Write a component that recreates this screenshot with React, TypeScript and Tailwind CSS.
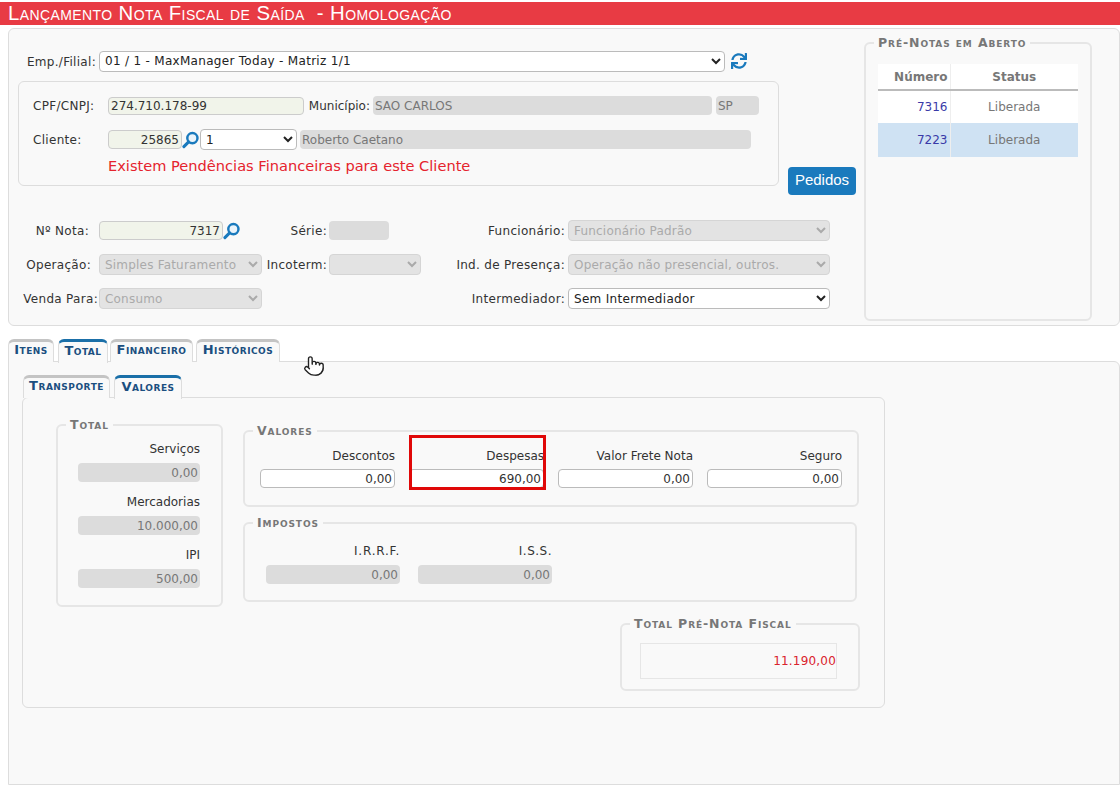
import React from 'react'
import { Pointer } from 'lucide-react'
import { FaSync } from 'react-icons/fa'

const fieldset = 'border-2 border-[#e6e6e6] rounded-md'
const legend = 'ml-2 px-1 text-[12.5px] leading-3 font-bold [font-variant:small-caps] text-[#777] tracking-[0.9px]'
const greyInput = 'h-[19px] bg-[#dcdcdc] rounded-sm px-0.5 text-[12px] text-[#777] outline-none'
const whiteInput = 'h-[19px] bg-white border border-[#bbb] rounded-sm px-0.5 text-[12px] text-[#333] text-right outline-none'
const greenInput = 'bg-[#f1f4ea] border border-[#ccc] rounded-sm px-0.5 text-[12px] text-[#333] outline-none'
const disabledSelect = 'h-[21px] bg-[#e3e3e3] border border-[#d5d5d5] rounded-sm pl-px text-[12px] text-[#aaa] tracking-[0.2px]'
const activeSelect = 'h-[21px] bg-white border border-[#bbb] rounded-sm pl-px text-[12px] text-[#222] tracking-[0.3px]'
const formLabel = 'pt-px text-[12px] text-[#333] tracking-[0.3px] shrink-0'
const label = 'text-[12px] text-[#333] text-right shrink-0'

function Lens() {
  return (
    <svg viewBox="0 0 18 18" className="w-[17px] h-[18px] shrink-0">
      <circle cx="11" cy="7" r="5.4" fill="#eaf4fb" stroke="#1a7abd" strokeWidth="2.6" />
      <path d="M7 11 L2 16" stroke="#1a7abd" strokeWidth="3.2" strokeLinecap="round" />
    </svg>
  )
}

function Tab({ text, active, width }: { text: string; active?: boolean; width: string }) {
  return (
    <div
      className={`${width} pb-1 flex items-center justify-center rounded-t-md border-x border-[#ddd] border-t-[3px] text-[13px] tracking-[0.5px] font-bold [font-variant:small-caps] text-[#1b4f80] bg-[#f9f9f9] ${
        active ? 'border-t-[#1a6fa8] z-10 h-[24px] -mb-px' : 'h-[23px] border-t-[#c4c4c4]'
      }`}
    >
      {text}
    </div>
  )
}

function ReadOnlyTotal({ name, value }: { name: string; value: string }) {
  return (
    <div className="flex flex-col items-end w-[122px]">
      <div className={`${label} leading-4`}>{name}</div>
      <input readOnly value={value} className={`${greyInput} w-[122px] text-right mt-1.5 mb-3`} />
    </div>
  )
}

function MoneyField({ name, value }: { name: string; value: string }) {
  return (
    <div className="flex flex-col items-stretch">
      <div className={`${label} leading-4`}>{name}</div>
      <input readOnly value={value} className={`${whiteInput} mt-[5px] w-full`} />
    </div>
  )
}

export default function App() {
  return (
    <div className="relative w-[1120px] h-[785px] overflow-hidden bg-white pt-0.5 flex flex-col font-['DejaVu_Sans',sans-serif]">
      {/* Title bar */}
      <div className="h-[23px] bg-[#e83b44] pl-2 flex items-center text-white text-[20.4px] tracking-[0.4px] [font-variant:small-caps] font-['Liberation_Sans',sans-serif] whitespace-pre">
        Lançamento Nota Fiscal de Saída  - Homologação
      </div>

      {/* Header form */}
      <div className="ml-2 mt-[3px] h-[298px] bg-[#f9f9f9] border border-[#ddd] rounded-md flex shrink-0">
        <div className="w-[855px] shrink-0 pt-[22px]">
          <div className="flex items-center h-5">
            <span className={`${formLabel} w-[87px] text-right`}>Emp./Filial:</span>
            <select className={`${activeSelect} ml-[3px] w-[626px] h-5`}>
              <option>01 / 1 - MaxManager Today - Matriz 1/1</option>
            </select>
            <FaSync className="ml-1.5 text-[#1a7abd] text-[16px]" />
          </div>

          <div className="flex mt-[10px] ml-[9px]">
            <div className="w-[761px] h-[105px] border border-[#ddd] rounded-md pt-[14px] pl-[14px]">
              <div className="flex items-center">
                <span className={`${formLabel} w-[75px]`}>CPF/CNPJ:</span>
                <input readOnly value="274.710.178-99" className={`${greenInput} w-[196px] h-[18px]`} />
                <span className="pt-px text-[12px] text-[#333] shrink-0 ml-1 w-[62px] text-right">Município:</span>
                <input readOnly value="SAO CARLOS" className={`${greyInput} ml-[3px] w-[339px] h-[18px]`} />
                <input readOnly value="SP" className={`${greyInput} ml-1 w-[43px] h-[18px]`} />
              </div>
              <div className="flex items-center mt-[14px]">
                <span className={`${formLabel} w-[75px]`}>Cliente:</span>
                <input readOnly value="25865" className={`${greenInput} w-[74px] h-[19px] text-right`} />
                <Lens />
                <select className={`${activeSelect} ml-px w-[97px]`}>
                  <option>1</option>
                </select>
                <input readOnly value="Roberto Caetano" className={`${greyInput} ml-[3px] w-[451px]`} />
              </div>
              <div className="ml-[75px] mt-[7px] text-[14.6px] leading-[18px] text-[#e5232d]">
                Existem Pendências Financeiras para este Cliente
              </div>
            </div>
            <button className="self-end -mb-[9px] ml-[9px] w-[68px] h-7 pb-0.5 bg-[#1a7abd] rounded-sm text-white text-[15px] font-['Liberation_Sans',sans-serif]">
              Pedidos
            </button>
          </div>

          <div className="mt-[34px] flex flex-col gap-[13px]">
            <div className="flex items-center h-[21px]">
              <span className={`${formLabel} w-[80px] mr-[10px] text-right`}>Nº Nota:</span>
              <input readOnly value="7317" className={`${greenInput} w-[124px] h-[19px] text-right`} />
              <Lens />
              <span className={`${formLabel} w-[87px] text-right`}>Série:</span>
              <input readOnly value="" className={`${greyInput} ml-0.5 w-[60px]`} />
              <span className={`${formLabel} w-[176px] text-right`}>Funcionário:</span>
              <select disabled className={`${disabledSelect} ml-[3px] w-[262px]`}>
                <option>Funcionário Padrão</option>
              </select>
            </div>
            <div className="flex items-center h-[21px]">
              <span className={`${formLabel} w-[82px] mr-2 text-right`}>Operação:</span>
              <select disabled className={`${disabledSelect} w-[163px]`}>
                <option>Simples Faturamento</option>
              </select>
              <span className={`${formLabel} w-[65px] text-right`}>Incoterm:</span>
              <select disabled className={`${disabledSelect} ml-0.5 w-[92px]`}>
                <option></option>
              </select>
              <span className={`${formLabel} w-[144px] text-right`}>Ind. de Presença:</span>
              <select disabled className={`${disabledSelect} ml-[3px] w-[262px]`}>
                <option>Operação não presencial, outros.</option>
              </select>
            </div>
            <div className="flex items-center h-[21px]">
              <span className={`${formLabel} w-[89px] mr-px text-right`}>Venda Para:</span>
              <select disabled className={`${disabledSelect} w-[163px]`}>
                <option>Consumo</option>
              </select>
              <span className={`${formLabel} w-[303px] text-right`}>Intermediador:</span>
              <select className={`${activeSelect} ml-[3px] w-[262px]`}>
                <option>Sem Intermediador</option>
              </select>
            </div>
          </div>
        </div>

        {/* Open notes */}
        <fieldset className={`${fieldset} w-[228px] h-[284px] mt-2`}>
          <legend className={legend}>Pré-Notas em Aberto</legend>
          <div className="pl-3 pt-[15px]">
            <table className="w-[200px] text-[12px] text-[#777] border-collapse">
              <thead>
                <tr className="h-[26px] bg-white border-b-2 border-[#bbb]">
                  <th className="w-[72px] pr-0.5 text-right border-r border-[#eee]">Número</th>
                  <th className="text-center">Status</th>
                </tr>
              </thead>
              <tbody>
                <tr className="h-[33px] bg-white">
                  <td className="pr-0.5 text-right text-[#3a3aa8] border-r border-[#eee]">7316</td>
                  <td className="text-center">Liberada</td>
                </tr>
                <tr className="h-[34px] bg-[#cfe2f3]">
                  <td className="pr-0.5 text-right text-[#3a3aa8] border-r border-[#eee]">7223</td>
                  <td className="text-center">Liberada</td>
                </tr>
              </tbody>
            </table>
          </div>
        </fieldset>
      </div>

      {/* Main tabs */}
      <div className="ml-2 mt-[13px] flex items-start gap-0.5 h-[22px] shrink-0 relative">
        <Tab text="Itens" width="w-[46px] mr-0.5" />
        <Tab text="Total" width="w-[50px]" active />
        <Tab text="Financeiro" width="w-[83px] mr-px" />
        <Tab text="Históricos" width="w-[84px]" />
      </div>
      <div className="ml-2 flex-1 bg-[#f9f9f9] border border-[#ddd] rounded-tr-md pt-[13px] pl-[13px]">
        <div className="flex items-start gap-1 h-[22px] pl-px">
          <Tab text="Transporte" width="w-[87px]" />
          <Tab text="Valores" width="w-[68px]" active />
        </div>
        <div className="w-[863px] h-[311px] border border-[#ddd] rounded-md pt-[21px] pl-[33px] flex items-start">
          <fieldset className={`${fieldset} w-[167px] h-[188px]`}>
            <legend className={legend}>Total</legend>
            <div className="pl-5 pt-2.5">
              <ReadOnlyTotal name="Serviços" value="0,00" />
              <ReadOnlyTotal name="Mercadorias" value="10.000,00" />
              <ReadOnlyTotal name="IPI" value="500,00" />
            </div>
          </fieldset>

          <div className="ml-5 mt-1.5">
            <fieldset className={`${fieldset} w-[616px] h-[82px]`}>
              <legend className={legend}>Valores</legend>
              <div className="pl-[15px] pt-[11px]">
                <div className="relative grid grid-cols-4 gap-x-[14px] w-[582px]">
                  <MoneyField name="Descontos" value="0,00" />
                  <MoneyField name="Despesas" value="690,00" />
                  <MoneyField name="Valor Frete Nota" value="0,00" />
                  <MoneyField name="Seguro" value="0,00" />
                  <div className="absolute left-[149px] -top-[13px] w-[137px] h-[55px] border-[3px] border-[#e00808]" />
                </div>
              </div>
            </fieldset>

            <fieldset className={`${fieldset} mt-2.5 w-[614px] h-[85px]`}>
              <legend className={legend}>Impostos</legend>
              <div className="pl-[21px] pt-[14px] flex gap-[18px]">
                <div className="w-[134px] flex flex-col">
                  <div className={`${label} leading-4 tracking-[0.8px]`}>I.R.R.F.</div>
                  <input readOnly value="0,00" className={`${greyInput} mt-1.5 text-right`} />
                </div>
                <div className="w-[134px] flex flex-col">
                  <div className={`${label} leading-4 tracking-[0.5px]`}>I.S.S.</div>
                  <input readOnly value="0,00" className={`${greyInput} mt-1.5 text-right`} />
                </div>
              </div>
            </fieldset>

            <fieldset className={`${fieldset} mt-4 ml-[377px] w-[240px] h-[73px]`}>
              <legend className={legend}>Total Pré-Nota Fiscal</legend>
              <div className="pl-[18px] pt-[13px]">
                <div className="w-[197px] h-9 border border-[#e6e6e6] flex items-center justify-end text-[12px] tracking-[0.2px] text-[#d9232d]">
                  11.190,00
                </div>
              </div>
            </fieldset>
          </div>
        </div>
      </div>

      {/* Mouse pointer captured in the screenshot */}
      <Pointer className="absolute left-[303px] top-[354px] w-[22px] h-[24px] text-[#222] fill-white" strokeWidth={1.5} />
    </div>
  )
}
